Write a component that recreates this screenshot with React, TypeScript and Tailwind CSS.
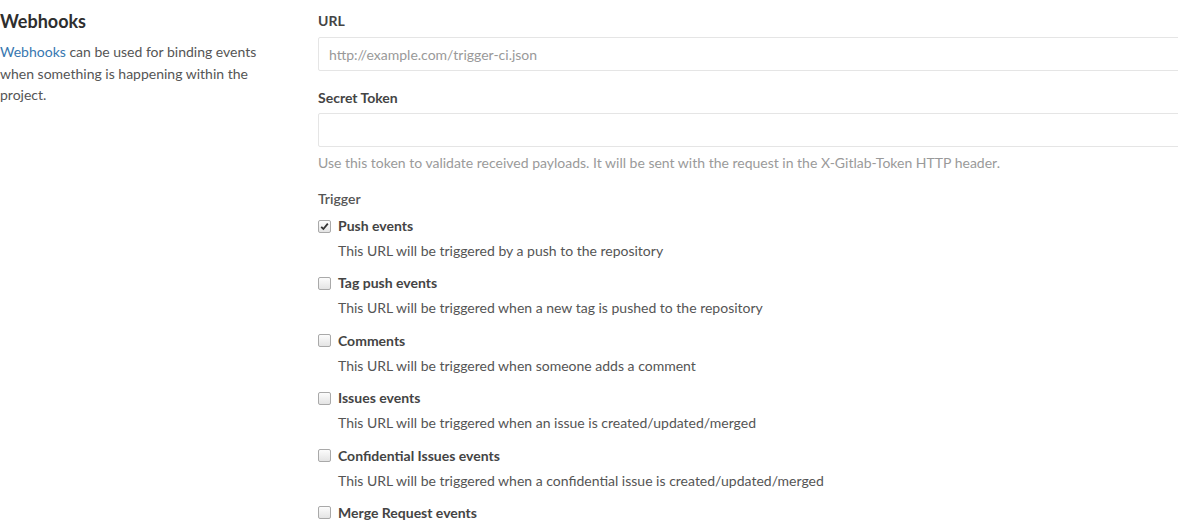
const font = { fontFamily: 'Lato, "Noto Sans", sans-serif' };

const TRIGGERS = [
  { label: 'Push events', desc: 'This URL will be triggered by a push to the repository', checked: true },
  { label: 'Tag push events', desc: 'This URL will be triggered when a new tag is pushed to the repository', checked: false },
  { label: 'Comments', desc: 'This URL will be triggered when someone adds a comment', checked: false },
  { label: 'Issues events', desc: 'This URL will be triggered when an issue is created/updated/merged', checked: false },
  { label: 'Confidential Issues events', desc: 'This URL will be triggered when a confidential issue is created/updated/merged', checked: false },
  { label: 'Merge Request events', desc: 'This URL will be triggered when a merge request is created/updated/merged', checked: false },
];

function Box({ checked }: { checked: boolean }) {
  return (
    <span className="w-[13px] h-[13px] shrink-0 rounded-[2px] border border-[#a9a9a9] bg-gradient-to-b from-[#fcfcfc] to-[#e4e4e4] flex items-center justify-center">
      {checked && (
        <svg width="9" height="9" viewBox="0 0 9 9">
          <path d="M1.2 4.8 L3.4 7 L7.8 1.6" fill="none" stroke="#333" strokeWidth="1.8" />
        </svg>
      )}
    </span>
  );
}

export default function App() {
  return (
    <div className="w-[1178px] h-[522px] overflow-hidden bg-white flex" style={font}>
      {/* 왼쪽 설명 */}
      <div className="w-[318px] shrink-0 pt-[9px]">
        <h4 className="text-[18px] leading-[24px] font-bold text-[#2e2e2e]">Webhooks</h4>
        <p className="mt-[8px] w-[265px] text-[14px] leading-[21.5px] text-[#555]">
          <span className="text-[#3777b0]">Webhooks</span> can be used for binding events when something is happening within the project.
        </p>
      </div>

      {/* 폼 */}
      <div className="w-[900px] shrink-0 pt-[11px]">
        <div className="text-[14px] leading-[20px] font-bold text-[#444]">URL</div>
        <div className="mt-[6px] h-[34px] border border-[#e5e5e5] rounded-[2px] flex items-center px-[10px] text-[14px] text-[#999]">
          http://example.com/trigger-ci.json
        </div>

        <div className="mt-[17px] text-[14px] leading-[20px] font-bold text-[#444]">Secret Token</div>
        <div className="mt-[5px] h-[34px] border border-[#e5e5e5] rounded-[2px]" />
        <div className="mt-[6px] text-[14px] leading-[20px] text-[#9a9a9a]">
          Use this token to validate received payloads. It will be sent with the request in the X-Gitlab-Token HTTP header.
        </div>

        <div className="mt-[16px] text-[14px] leading-[20px] font-semibold text-[#555]">Trigger</div>
        <div className="mt-[7px] flex flex-col gap-[12.4px]">
          {TRIGGERS.map(t => (
            <div key={t.label}>
              <div className="flex items-center gap-[7px]">
                <Box checked={t.checked} />
                <span className="text-[14px] leading-[20px] font-bold text-[#444]">{t.label}</span>
              </div>
              <div className="mt-[5px] pl-[20px] text-[14px] leading-[20px] text-[#555]">{t.desc}</div>
            </div>
          ))}
        </div>
      </div>
    </div>
  );
}
